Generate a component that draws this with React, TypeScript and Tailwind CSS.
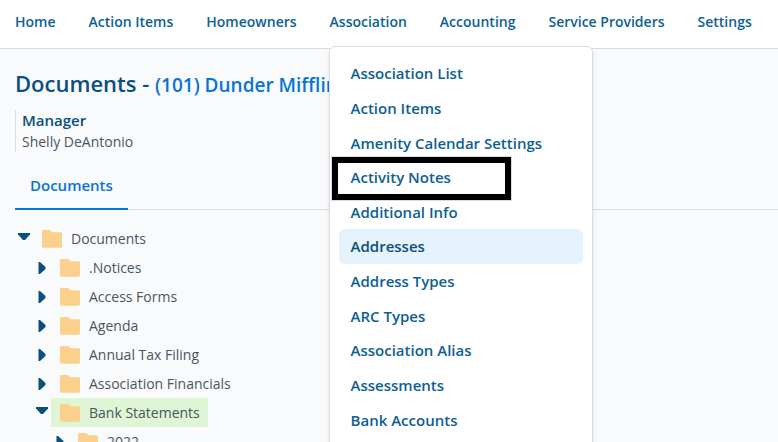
import React from "react";

const menuItems = [
  "Association List",
  "Action Items",
  "Amenity Calendar Settings",
  "Activity Notes",
  "Additional Info",
  "Addresses",
  "Address Types",
  "ARC Types",
  "Association Alias",
  "Assessments",
  "Bank Accounts",
];

type FolderNode = { name: string; open?: boolean; selected?: boolean; children?: FolderNode[] };

const tree: FolderNode = {
  name: "Documents",
  open: true,
  children: [
    { name: ".Notices" },
    { name: "Access Forms" },
    { name: "Agenda" },
    { name: "Annual Tax Filing" },
    { name: "Association Financials" },
    { name: "Bank Statements", open: true, selected: true, children: [{ name: "2022" }] },
  ],
};

function FolderIcon() {
  return (
    <svg width="20" height="18" viewBox="0 0 20 18" fill="#fad08c" aria-hidden="true">
      <path d="M1.5 0H8.2L10.4 2.3H18.3Q20 2.3 20 4V16Q20 17.7 18.3 17.7H1.7Q0 17.7 0 16V1.5Q0 0 1.5 0Z" />
    </svg>
  );
}

function Folder({ node }: { node: FolderNode }) {
  return (
    <li>
      <div className="flex h-[29px] items-center">
        <button
          type="button"
          aria-label={`Toggle ${node.name}`}
          className="flex h-full w-[18px] items-center justify-center text-[#0b4f7c]"
        >
          {node.open ? (
            <svg width="12" height="8" viewBox="0 0 12 8" fill="currentColor" className="mb-1">
              <path d="M0 0H12V1.5L7 7H5L0 1.5Z" />
            </svg>
          ) : (
            <svg width="8" height="12" viewBox="0 0 8 12" fill="currentColor">
              <path d="M0.5 0H2L7.5 5V7L2 12H0.5Z" />
            </svg>
          )}
        </button>
        <button
          type="button"
          className={`flex h-full items-center gap-[9px] pr-2 pl-[9px] whitespace-nowrap text-[#4a5560] ${
            node.selected ? "bg-[#dff6d4]" : ""
          }`}
        >
          <FolderIcon />
          {node.name}
        </button>
      </div>
      {node.children && (
        <ul className="pl-[18px]">
          {node.children.map((child) => (
            <Folder key={child.name} node={child} />
          ))}
        </ul>
      )}
    </li>
  );
}

function AssociationMenu() {
  return (
    <div className="absolute top-[34px] -left-px z-10 w-[264px] rounded-md border border-[#d9dce0] bg-white px-[9px] pt-[9px] pb-6 shadow-md">
      <ul className="grid h-[381px] auto-rows-fr">
        {menuItems.map((item) => (
          <li key={item} className="relative">
            {item === "Activity Notes" && (
              <span className="pointer-events-none absolute -top-[3px] -left-[7px] h-[43px] w-[179px] border-6 border-black outline outline-[#d9dce0]" />
            )}
            <a
              href="#"
              className={`flex h-full items-center rounded-md px-3 text-[15px] whitespace-nowrap ${
                item === "Addresses" ? "bg-[#e6f3fc] text-[#0b4f7c]" : ""
              }`}
            >
              {item}
            </a>
          </li>
        ))}
      </ul>
    </div>
  );
}

const navItems = [
  "Home",
  "Action Items",
  "Homeowners",
  "Association",
  "Accounting",
  "Service Providers",
  "Settings",
];

export default function App() {
  return (
    <div className="h-screen overflow-hidden bg-[#f9fafc] font-['Open_Sans','Noto_Sans',sans-serif] text-sm">
      <nav className="h-[49px] border-b border-[#d9dce0] bg-white px-[15px] pt-3">
        <ul className="flex gap-[33px] text-sm leading-5 font-semibold text-[#0d6093]">
          {navItems.map((item) => (
            <li key={item} className={item === "Association" ? "relative" : ""}>
              <a href="#" className="whitespace-nowrap">
                {item}
              </a>
              {item === "Association" && <AssociationMenu />}
            </li>
          ))}
        </ul>
      </nav>

      <main className="px-[15px] pt-[18px]">
        <h1 className="text-[22px] leading-8 font-semibold whitespace-nowrap text-[#0b4f7c]">
          Documents - <span className="text-[19px] leading-6 text-[#0a74d4]">(101) Dunder Mifflin</span>
        </h1>

        <dl className="mt-[11px] border-l border-[#d9dce0] pl-[6px] leading-[21px]">
          <dt className="text-[15px] font-semibold text-[#0b4f7c]">Manager</dt>
          <dd className="text-[#4a5560]">Shelly DeAntonio</dd>
        </dl>

        <div role="tablist" className="mt-3 -mr-[15px] flex border-b border-[#d9dce0]">
          <button
            type="button"
            role="tab"
            aria-selected="true"
            className="-mb-px h-[46px] border-b-2 border-[#0a74d4] px-[15px] text-[15px] font-semibold text-[#0a74d4]"
          >
            Documents
          </button>
        </div>

        <ul className="mt-[14px]">
          <Folder node={tree} />
        </ul>
      </main>
    </div>
  );
}
